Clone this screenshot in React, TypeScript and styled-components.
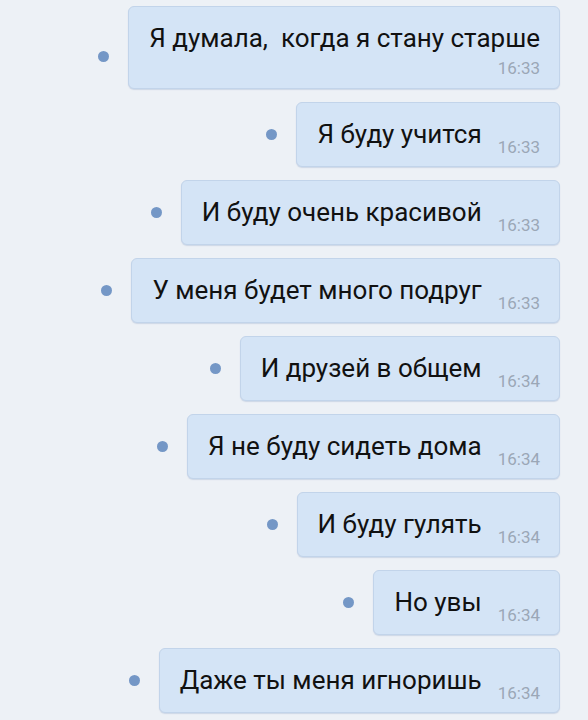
import React from "react";
import styled, { createGlobalStyle } from "styled-components";

const GlobalStyle = createGlobalStyle`
  html, body {
    margin: 0;
    padding: 0;
    background: #edf1f6;
  }
  body {
    font-family: Roboto, "Noto Sans", "Liberation Sans", sans-serif;
  }
`;

const Page = styled.div`
  width: 588px;
  height: 720px;
  box-sizing: border-box;
  padding: 6px 28px 0 0;
  display: flex;
  flex-direction: column;
  align-items: flex-end;
  gap: 13px;
  background: #edf1f6;
  overflow: hidden;
`;

const Row = styled.div`
  display: flex;
  align-items: flex-end;
  gap: 19px;
`;

const Dot = styled.span`
  width: 11px;
  height: 11px;
  margin-bottom: 27px;
  border-radius: 50%;
  background: #7497c6;
  flex-shrink: 0;
`;

const Bubble = styled.div<{ $stacked?: boolean }>`
  box-sizing: border-box;
  display: flex;
  flex-direction: ${(p) => (p.$stacked ? "column" : "row")};
  align-items: ${(p) => (p.$stacked ? "stretch" : "flex-end")};
  padding: ${(p) => (p.$stacked ? "16px 19px 11px 20px" : "16px 19px 17px 20px")};
  background: #d4e4f6;
  border: 1px solid #c2d4ea;
  border-radius: 6px;
  box-shadow: 0 1px 1px rgba(150, 170, 200, 0.35);
`;

const Text = styled.span`
  font-size: 26px;
  line-height: 30px;
  color: #111;
  white-space: pre;
`;

const Time = styled.span<{ $stacked?: boolean }>`
  font-size: 17px;
  line-height: 18px;
  color: #9ba7b6;
  margin-left: ${(p) => (p.$stacked ? "0" : "16px")};
  margin-bottom: ${(p) => (p.$stacked ? "0" : "-7px")};
  margin-top: ${(p) => (p.$stacked ? "6px" : "0")};
  align-self: ${(p) => (p.$stacked ? "flex-end" : "auto")};
`;

type Msg = { text: string; time: string; stacked?: boolean };

const messages: Msg[] = [
  { text: "Я думала,  когда я стану старше", time: "16:33", stacked: true },
  { text: "Я буду учится", time: "16:33" },
  { text: "И буду очень красивой", time: "16:33" },
  { text: "У меня будет много подруг", time: "16:33" },
  { text: "И друзей в общем", time: "16:34" },
  { text: "Я не буду сидеть дома", time: "16:34" },
  { text: "И буду гулять", time: "16:34" },
  { text: "Но увы", time: "16:34" },
  { text: "Даже ты меня игноришь", time: "16:34" },
];

export default function App() {
  return (
    <>
      <GlobalStyle />
      <Page>
        {messages.map((m, i) => (
          <Row key={i}>
            <Dot />
            <Bubble $stacked={m.stacked}>
              <Text>{m.text}</Text>
              <Time $stacked={m.stacked}>{m.time}</Time>
            </Bubble>
          </Row>
        ))}
      </Page>
    </>
  );
}
